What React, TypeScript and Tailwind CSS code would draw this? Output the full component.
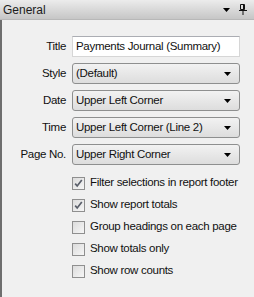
import React from "react"

const fields = [
  { label: "Style", value: "(Default)" },
  { label: "Date", value: "Upper Left Corner" },
  { label: "Time", value: "Upper Left Corner (Line 2)" },
  { label: "Page No.", value: "Upper Right Corner" },
]

const options = [
  { label: "Filter selections in report footer", checked: true },
  { label: "Show report totals", checked: true },
  { label: "Group headings on each page", checked: false },
  { label: "Show totals only", checked: false },
  { label: "Show row counts", checked: false },
]

function Arrow() {
  return (
    <svg width="7" height="4" viewBox="0 0 7 4">
      <path d="M0 0h7L3.5 4z" fill="#000" />
    </svg>
  )
}

function Check() {
  return (
    <svg width="9" height="9" viewBox="0 0 9 9">
      <path d="M1.2 4.6l2 2.4L7.8 1" stroke="#5a5f6a" strokeWidth="1.7" fill="none" />
    </svg>
  )
}

export default function App() {
  return (
    <div
      className="w-[254px] h-[297px] bg-[#f0f0f0] text-[11.5px] tracking-[-0.3px] text-[#111] overflow-hidden flex flex-col"
      style={{ fontFamily: "'Liberation Sans', Arial, sans-serif" }}
    >
      {/* Header */}
      <div className="h-[20px] shrink-0 flex items-center justify-between pl-[3px] pr-[7px] bg-gradient-to-b from-[#ececec] to-[#c6c6c6] border-b border-[#b8b8b8]">
        <span className="text-[12px] tracking-normal text-[#1b1b1b]">General</span>
        <div className="flex items-center gap-[9px]">
          <Arrow />
          <svg width="8" height="11" viewBox="0 0 8 11">
            <path d="M1.5 0.5h4v5h-4z" fill="none" stroke="#111" />
            <path d="M4.5 0.5v5" stroke="#111" />
            <path d="M0 6h8v1H0z" fill="#111" />
            <path d="M3.5 7h1v4h-1z" fill="#111" />
          </svg>
        </div>
      </div>

      {/* Body */}
      <div className="flex-1 border-l-2 border-[#6e6e6e] pt-[16px]">
        <div className="grid grid-cols-[64px_168px] gap-x-[6px] gap-y-[6px] items-center">
          <span className="text-right">Title</span>
          <div className="h-[21px] bg-white border border-[#d6d6d6] border-t-[#abadb3] flex items-center px-[3px]">
            Payments Journal (Summary)
          </div>
          {fields.map((f) => (
            <React.Fragment key={f.label}>
              <span className="text-right">{f.label}</span>
              <div className="h-[21px] rounded-[3px] border border-[#8e8f8f] bg-gradient-to-b from-[#f2f2f2] to-[#dddddd] flex items-center justify-between pl-[3px] pr-[8px]">
                <span>{f.value}</span>
                <Arrow />
              </div>
            </React.Fragment>
          ))}
        </div>

        <div className="mt-[11px] pl-[70px] flex flex-col gap-[8px]">
          {options.map((o) => (
            <div key={o.label} className="flex items-center gap-[5px] h-[14px]">
              <div className="w-[13px] h-[13px] border border-[#8f8f8f] bg-gradient-to-br from-[#dcdcdc] to-[#f6f6f6] flex items-center justify-center">
                {o.checked && <Check />}
              </div>
              <span>{o.label}</span>
            </div>
          ))}
        </div>
      </div>
    </div>
  )
}
